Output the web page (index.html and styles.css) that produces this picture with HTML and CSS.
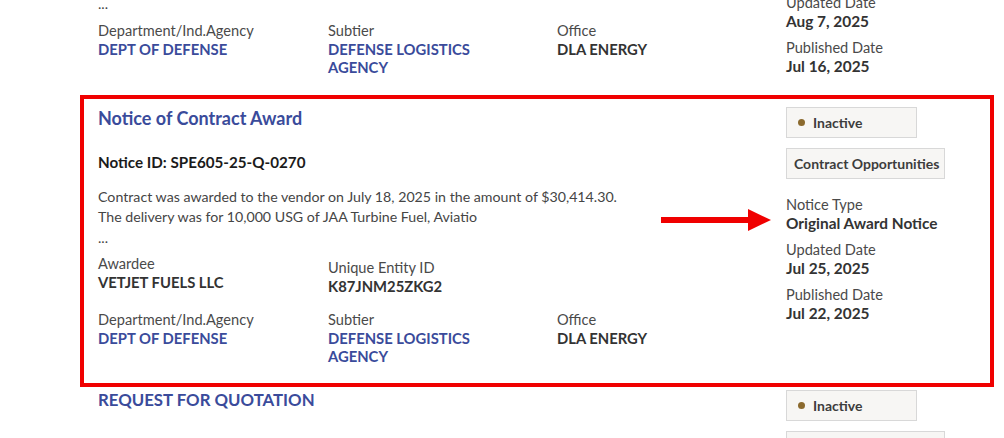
FILE: index.html
```html
<!DOCTYPE html>
<html lang="en">
<head>
<meta charset="utf-8">
<title>Search results</title>
<link rel="stylesheet" href="styles.css">
</head>
<body>
<main class="results">
  <article class="item item-partial">
    <div class="main-col">
      <p class="desc">Contract was awarded to the vendor.<br>Fuel delivery<br>...</p>
      <div class="fields">
        <div class="field"><div class="label">Department/Ind.Agency</div><div class="value link">DEPT OF DEFENSE</div></div>
        <div class="field"><div class="label">Subtier</div><div class="value link">DEFENSE LOGISTICS AGENCY</div></div>
        <div class="field"><div class="label">Office</div><div class="value">DLA ENERGY</div></div>
      </div>
    </div>
    <aside class="side-col">
      <div class="field"><div class="label">Notice Type</div><div class="value">Original Award Notice</div></div>
      <div class="field"><div class="label">Updated Date</div><div class="value">Aug 7, 2025</div></div>
      <div class="field"><div class="label">Published Date</div><div class="value">Jul 16, 2025</div></div>
    </aside>
  </article>

  <article class="item item-highlight">
    <div class="main-col">
      <h2 class="title">Notice of Contract Award</h2>
      <h3 class="notice-id">Notice ID: SPE605-25-Q-0270</h3>
      <p class="desc">Contract was awarded to the vendor on July 18, 2025 in the amount of $30,414.30.<br>The delivery was for 10,000 USG of JAA Turbine Fuel, Aviatio<br>...</p>
      <div class="fields">
        <div class="field"><div class="label">Awardee</div><div class="value">VETJET FUELS LLC</div></div>
        <div class="field field-shift"><div class="label">Unique Entity ID</div><div class="value">K87JNM25ZKG2</div></div>
      </div>
      <div class="fields">
        <div class="field"><div class="label">Department/Ind.Agency</div><div class="value link">DEPT OF DEFENSE</div></div>
        <div class="field"><div class="label">Subtier</div><div class="value link">DEFENSE LOGISTICS AGENCY</div></div>
        <div class="field"><div class="label">Office</div><div class="value">DLA ENERGY</div></div>
      </div>
    </div>
    <aside class="side-col">
      <div class="tag"><span class="dot"></span>Inactive</div>
      <div class="tag">Contract Opportunities</div>
      <div class="field field-first"><div class="label">Notice Type</div><div class="value">Original Award Notice</div></div>
      <div class="field"><div class="label">Updated Date</div><div class="value">Jul 25, 2025</div></div>
      <div class="field"><div class="label">Published Date</div><div class="value">Jul 22, 2025</div></div>
    </aside>
    <svg class="arrow" width="112" height="24" viewBox="0 0 112 24" aria-hidden="true">
      <rect x="0" y="8" width="90" height="6" fill="#f00000"/>
      <polygon points="87,0 110,11 87,22" fill="#f00000"/>
    </svg>
  </article>

  <article class="item item-next">
    <div class="main-col">
      <h2 class="title title-caps">REQUEST FOR QUOTATION</h2>
    </div>
    <aside class="side-col">
      <div class="tag"><span class="dot"></span>Inactive</div>
      <div class="tag">Contract Opportunities</div>
    </aside>
  </article>
</main>
</body>
</html>
```

FILE: styles.css
```css
* { box-sizing: border-box; }

html, body {
  margin: 0;
  padding: 0;
  background: #ffffff;
  overflow: hidden;
}

body {
  font-family: Lato, "Open Sans", "Liberation Sans", sans-serif;
  font-size: 14px;
  color: #1b1b1b;
  height: 438px;
}

.results {
  width: 914px;
  margin: -58px 0 0 80px;
}

.item {
  position: relative;
  display: grid;
  grid-template-columns: 688px 1fr;
  padding: 7px 14px 18px 14px;
  border: 4px solid transparent;
}

.item-partial {
  padding-bottom: 15px;
}

.item-partial .side-col {
  margin-top: -4px;
}

.item-highlight {
  border-color: #f00000;
}

.item-next {
  border-top-width: 0;
  padding-top: 2px;
}

p, h2, h3 { margin: 0; }

.title {
  font-size: 18px;
  font-weight: 700;
  color: #3a4b9b;
  line-height: 24px;
  margin-bottom: 21px;
}

.title-caps {
  font-size: 16.8px;
  margin: -1px 0 0 0;
}

.notice-id {
  font-size: 15.2px;
  font-weight: 700;
  color: #1b1b1b;
  line-height: 22px;
  margin-bottom: 14px;
}

.desc {
  font-size: 14.2px;
  color: #454545;
  line-height: 20.5px;
  margin-bottom: 7px;
}

.fields {
  display: grid;
  grid-template-columns: 230px 229px 1fr;
  margin-bottom: 16px;
}

.fields:last-child { margin-bottom: 0; }

.field {
  line-height: 18px;
}

.field-shift { padding-top: 4px; }

.label {
  font-size: 14.6px;
  color: #4a4a4a;
}

.value {
  font-size: 14.8px;
  font-weight: 700;
  color: #333333;
}

.value.link {
  color: #3a4b9b;
  max-width: 175px;
}

.side-col {
  display: flex;
  flex-direction: column;
  align-items: flex-start;
  gap: 9px;
}

.side-col .value { font-size: 15.4px; }

.tag {
  display: flex;
  align-items: center;
  height: 31px;
  min-width: 131px;
  padding: 0 5px 0 11px;
  background: #f7f6f4;
  border: 1.5px solid #d8d8d8;
  font-size: 14px;
  font-weight: 700;
  color: #3d3d3d;
  margin-top: 1px;
}

.tag + .tag { padding-left: 7px; }

.dot {
  width: 7px;
  height: 7px;
  border-radius: 50%;
  background: #8b6a2e;
  margin-right: 8px;
}

.field-first { margin-top: 8px; }

.arrow {
  position: absolute;
  left: 577px;
  top: 110px;
}
```
